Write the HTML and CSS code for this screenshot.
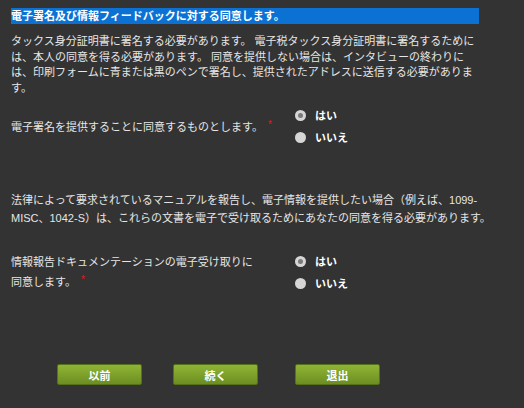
FILE: index.html
```html
<!DOCTYPE html>
<html lang="ja">
<head>
    <meta charset="UTF-8">
    <meta name="viewport" content="width=device-width, initial-scale=1.0">
    <title>電子署名の同意</title>
    <link rel="stylesheet" href="styles.css">
</head>
<body>
    <div class="consent-page">
        <h1 class="section-title">電子署名及び情報フィードバックに対する同意します。</h1>

        <p class="intro">タックス身分証明書に署名する必要があります。 電子税タックス身分証明書に署名するためには、本人の同意を得る必要があります。 同意を提供しない場合は、インタビューの終わりには、印刷フォームに青または黒のペンで署名し、提供されたアドレスに送信する必要があります。</p>

        <!-- Question 1 -->
        <div class="question q-sign">
            <div class="question-label">電子署名を提供することに同意するものとします。<span class="required">*</span></div>
            <div class="options">
                <label class="option"><span class="radio checked"></span>はい</label>
                <label class="option"><span class="radio"></span>いいえ</label>
            </div>
        </div>

        <p class="info">法律によって要求されているマニュアルを報告し、電子情報を提供したい場合（例えば、1099-MISC、1042-S）は、これらの文書を電子で受け取るためにあなたの同意を得る必要があります。</p>

        <!-- Question 2 -->
        <div class="question q-docs">
            <div class="question-label">情報報告ドキュメンテーションの電子受け取りに<br>同意します。<span class="required">*</span></div>
            <div class="options">
                <label class="option"><span class="radio checked"></span>はい</label>
                <label class="option"><span class="radio"></span>いいえ</label>
            </div>
        </div>

        <div class="button-row">
            <button class="button">以前</button>
            <button class="button">続く</button>
            <button class="button button-exit">退出</button>
        </div>
    </div>
</body>
</html>
```

FILE: styles.css
```css
body {
    margin: 0;
    background-color: #333333;
    color: #e6e6e6;
    font-family: "Liberation Sans", "Noto Sans CJK JP", sans-serif;
    font-size: 11px;
}
.consent-page {
    width: 468px;
    padding: 8px 11px;
}
.section-title {
    margin: 0;
    height: 16px;
    line-height: 16px;
    font-size: 11px;
    font-weight: bold;
    color: #ffffff;
    background-color: #0b72d4;
}
.intro {
    margin: 10px 0 0;
    line-height: 15.6px;
}
.question {
    display: flex;
    align-items: center;
}
.question-label {
    width: 284px;
    line-height: 18px;
}
.required {
    color: #e01b1b;
    margin-left: 5px;
    vertical-align: 3px;
    font-size: 10px;
}
.options {
    display: flex;
    flex-direction: column;
}
.option {
    display: flex;
    align-items: center;
    height: 22px;
    font-weight: bold;
    color: #ffffff;
}
.radio {
    position: relative;
    width: 11px;
    height: 11px;
    margin-right: 9px;
    border-radius: 50%;
    background-color: #d6d6d6;
}
.radio.checked::after {
    content: "";
    position: absolute;
    top: 3px;
    left: 3px;
    width: 5px;
    height: 5px;
    border-radius: 50%;
    background-color: #7a7a7a;
}
.q-sign {
    margin-top: 8px;
}
.info {
    width: 492px;
    margin: 43px 0 0;
    line-height: 18px;
}
.q-docs {
    margin-top: 23px;
}
.button-row {
    display: flex;
    gap: 31px;
    margin-top: 70px;
    padding-left: 46px;
}
.button {
    width: 85px;
    height: 21px;
    padding: 0;
    border: 1px solid #55721a;
    border-radius: 2px;
    background: linear-gradient(#8fb533, #6c8e22);
    color: #ffffff;
    font-family: inherit;
    font-size: 11px;
    font-weight: bold;
    cursor: pointer;
}
.button-exit {
    margin-left: 6px;
}
```
